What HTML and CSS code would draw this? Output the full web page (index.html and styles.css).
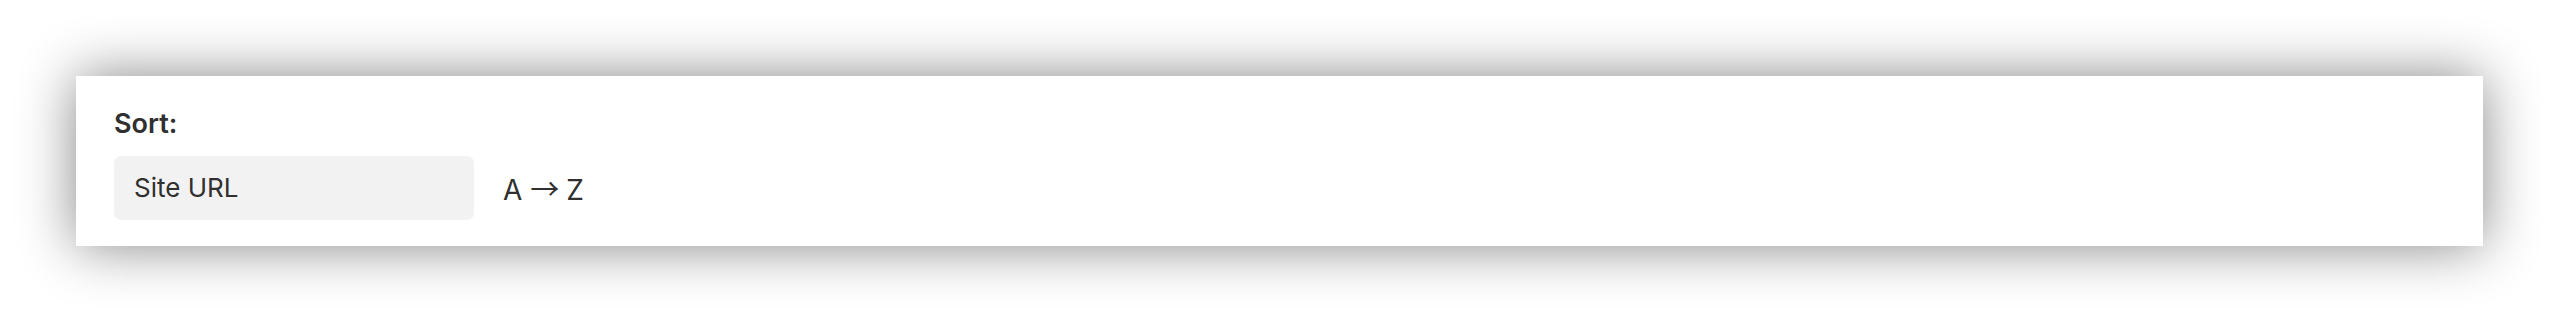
FILE: index.html
```html
<!DOCTYPE html>
<html lang="en">
<head>
<meta charset="utf-8">
<title>Sort</title>
<link rel="stylesheet" href="styles.css">
</head>
<body>
<div class="page">
  <section class="card">
    <div class="label">Sort:</div>
    <div class="row">
      <div class="select">Site URL</div>
      <div class="order">A<span class="arrow">→</span>Z</div>
    </div>
  </section>
</div>
</body>
</html>
```

FILE: styles.css
```css
html, body {
  margin: 0;
  padding: 0;
  background: #ffffff;
}
body {
  font-family: Inter, "Noto Sans", "Liberation Sans", sans-serif;
  color: #303030;
}
.page {
  padding: 76px 75px 76px 76px;
}
.card {
  background: #ffffff;
  box-shadow: 0 0 56px rgba(0, 0, 0, 0.48);
  padding: 32px 38px 26px 38px;
  height: 112px;
}
.label {
  font-size: 27px;
  font-weight: 600;
  line-height: 31.5px;
  margin-bottom: 16.5px;
}
.row {
  display: flex;
  align-items: center;
  gap: 29px;
}
.select {
  width: 340px;
  height: 64px;
  padding-left: 20px;
  background: #f2f2f2;
  border-radius: 7px;
  display: flex;
  align-items: center;
  font-size: 26px;
  line-height: 31.5px;
}
.order {
  font-size: 28px;
  line-height: 31.5px;
  padding-top: 3px;
}
.arrow {
  font-family: "Noto Sans CJK JP", sans-serif;
  font-size: 29px;
  margin: 0 7px 0 8px;
}
```
